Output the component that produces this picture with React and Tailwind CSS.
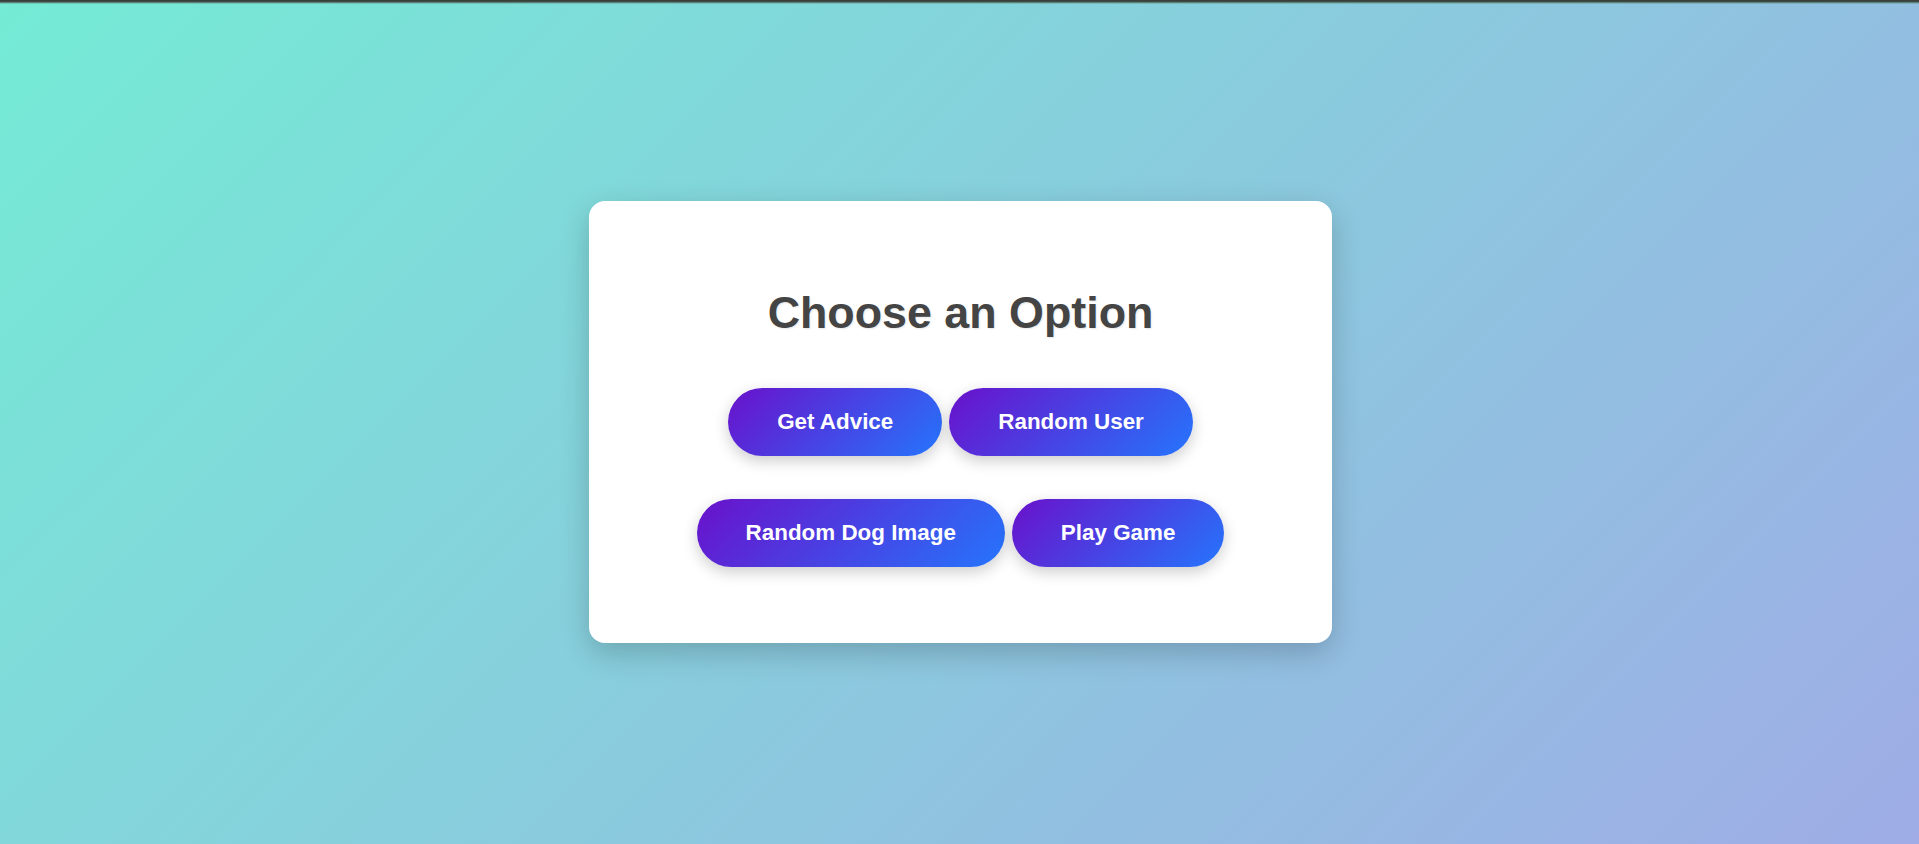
import React from 'react';

const options = [
  ['Get Advice', 'Random User'],
  ['Random Dog Image', 'Play Game'],
];

function OptionButton({ label }) {
  return (
    <button className="rounded-full bg-[linear-gradient(135deg,#6a11cb,#2575fc)] px-[49px] py-[21px] text-[22.4px] font-bold leading-[26px] text-white shadow-[0_5px_15px_rgba(0,0,0,0.2)]">
      {label}
    </button>
  );
}

export default function App() {
  return (
    <div className="relative flex min-h-screen items-center justify-center bg-[linear-gradient(135deg,#74ebd5,#9face6)] font-['Liberation_Sans',Arial,sans-serif]">
      {/* browser chrome shadow line at the very top */}
      <div className="absolute inset-x-0 top-0 h-[4px] bg-[linear-gradient(to_bottom,#363c38_0%,#3f4a45_40%,#5f8a80_65%,transparent_100%)]"></div>

      <div className="ml-[2px] flex w-[743px] flex-col items-center rounded-[16px] bg-white pt-[86px] pb-[76px] shadow-[0_10px_30px_rgba(0,0,0,0.2)]">
        <h1 className="text-[44.8px] font-bold leading-[51.5px] text-[#444] [text-shadow:1px_1px_2px_rgba(0,0,0,0.1)]">
          Choose an Option
        </h1>

        <div className="mt-[49px] flex flex-col items-center gap-[43px]">
          {options.map((row, i) => (
            <div key={i} className="flex gap-[7px]">
              {row.map((label) => (
                <OptionButton key={label} label={label} />
              ))}
            </div>
          ))}
        </div>
      </div>
    </div>
  );
}
